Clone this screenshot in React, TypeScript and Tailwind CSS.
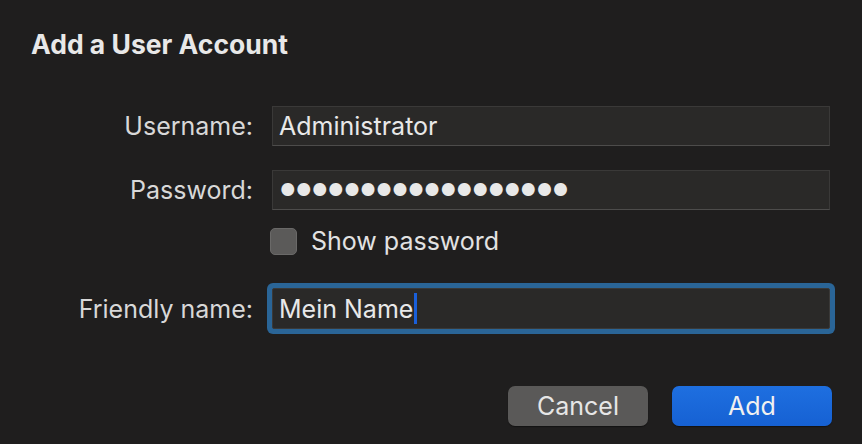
export default function App() {
  const font = { fontFamily: 'Inter, "Noto Sans", sans-serif' }
  return (
    <div className="w-[862px] h-[444px] bg-[#1f1e1e] text-[#e6e6e6] overflow-hidden" style={font}>
      <div className="pl-[31px] pt-[28px]">
        <h1 className="text-[26.5px] leading-[32px] font-bold tracking-[0px] text-[#e8e8e8]">Add a User Account</h1>
      </div>

      <div className="mt-[46px] grid grid-cols-[253px_558px] gap-x-[19px] items-center">
        {/* Username */}
        <label className="text-right text-[25px] leading-[30px] text-[#d8d8d8]">Username:</label>
        <div className="h-[40px] bg-[#2a2928] border border-[#3a3938] border-b-[#4d4c4b] flex items-center px-[6px] text-[25px] leading-[30px] text-[#e8e8e8]">
          Administrator
        </div>

        {/* Password */}
        <label className="mt-[24px] text-right text-[25px] leading-[30px] text-[#d8d8d8]">Password:</label>
        <div className="mt-[24px] h-[40px] bg-[#2a2928] border border-[#3a3938] border-b-[#4d4c4b] flex items-center px-[7px] text-[17px] leading-[30px] tracking-[0.5px] text-[#e8e8e8]">
          ●●●●●●●●●●●●●●●●●●
        </div>

        {/* Show password */}
        <div />
        <div className="mt-[16px] h-[30px] flex items-center -ml-[2px]">
          <div className="w-[27px] h-[27px] rounded-[5px] bg-[#5b5a59] border border-[#6a6968]" />
          <span className="ml-[14px] text-[25px] leading-[30px] text-[#e2e2e2]">Show password</span>
        </div>

        {/* Friendly name */}
        <label className="mt-[32px] text-right text-[25px] leading-[30px] text-[#d8d8d8]">Friendly name:</label>
        <div className="mt-[32px] h-[41px] bg-[#2a2928] border border-[#3a3938] flex items-center px-[6px] text-[25px] leading-[30px] text-[#e8e8e8] ring-[5px] ring-[#2a6597] rounded-[2px]">
          <span>Mein Name</span>
          <span className="w-[3px] h-[31px] bg-[#1a5fd9] ml-[1px]" />
        </div>
      </div>

      <div className="mt-[57px] flex justify-end pr-[30px] gap-[24px]">
        <button className="w-[140px] h-[40px] rounded-[7px] bg-[#5a5958] text-[25px] leading-[30px] text-[#e6e6e6] shadow-[0_1px_1px_rgba(0,0,0,0.4)]">
          Cancel
        </button>
        <button className="w-[160px] h-[40px] rounded-[7px] bg-gradient-to-b from-[#1e6fe0] to-[#1661d3] text-[25px] leading-[30px] text-[#f0f0f0] shadow-[0_1px_1px_rgba(0,0,0,0.4)]">
          Add
        </button>
      </div>
    </div>
  )
}
